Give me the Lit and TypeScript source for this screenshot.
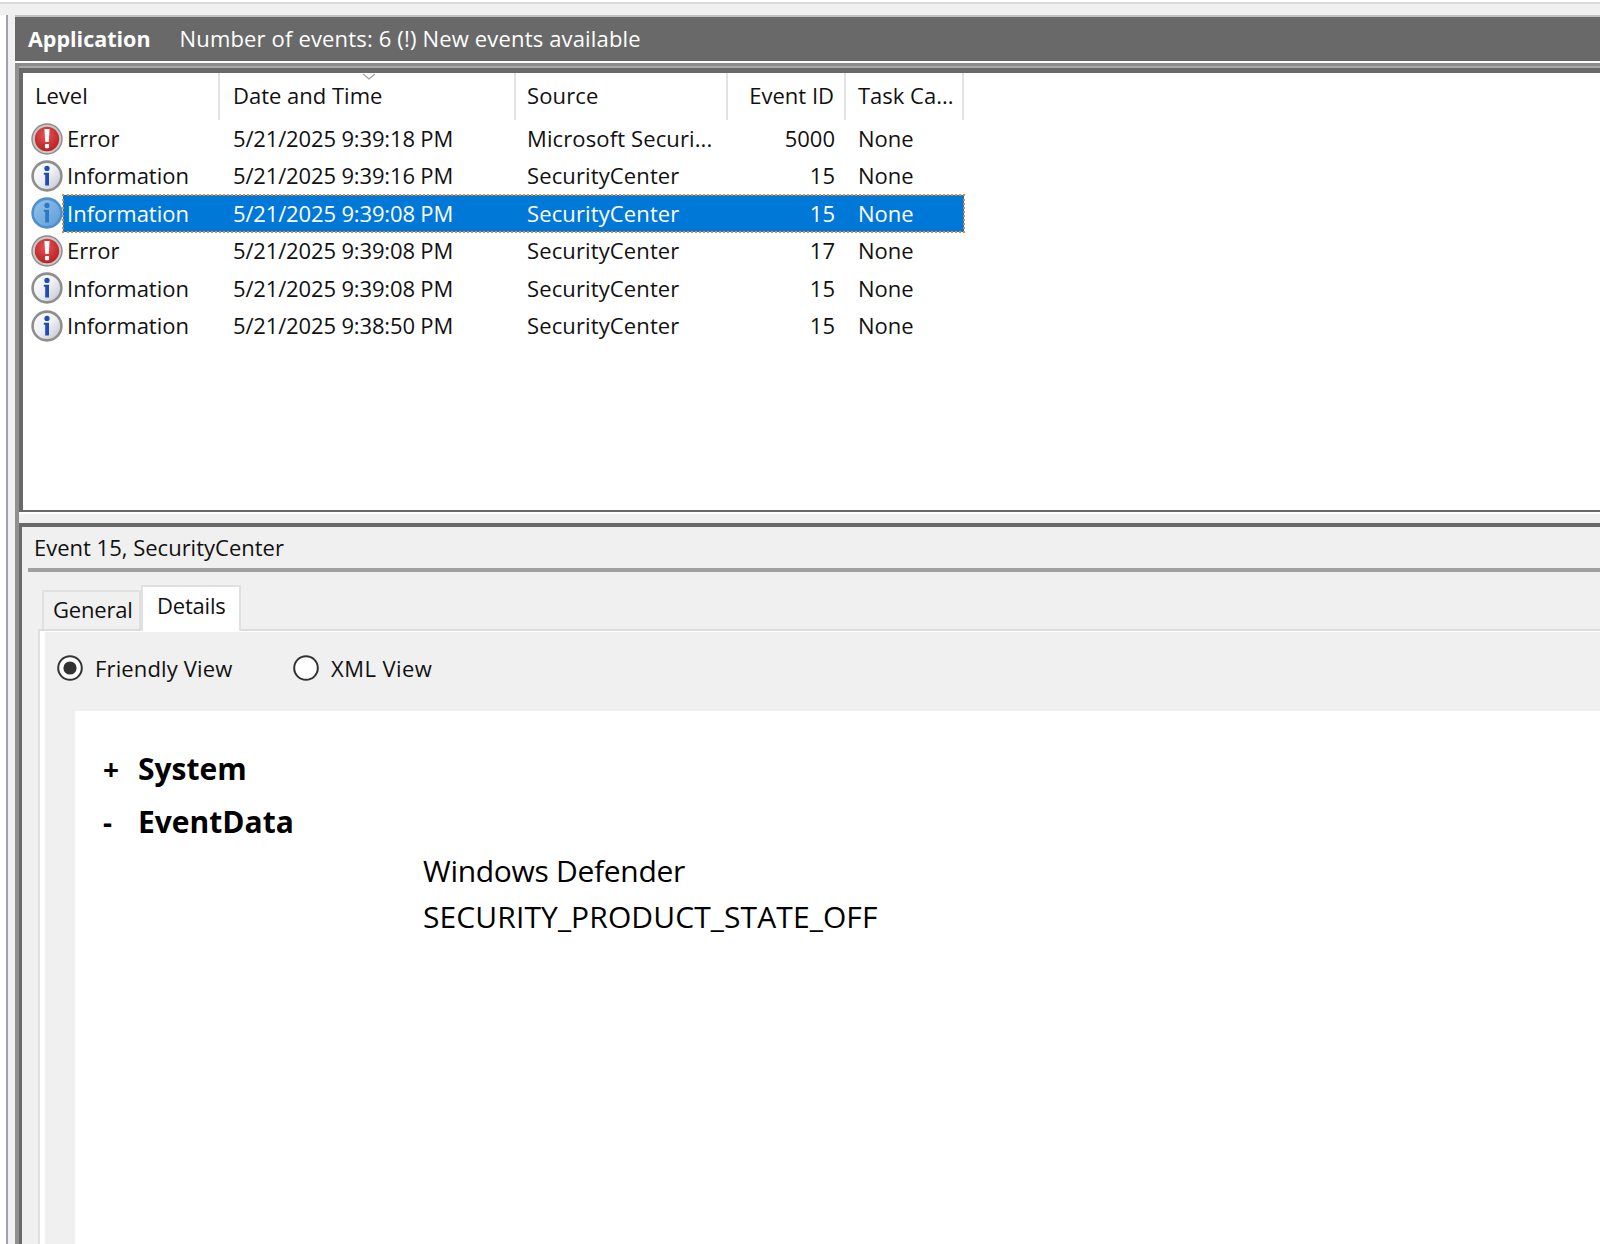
import { LitElement, css, html, svg } from "lit";
import { customElement } from "lit/decorators.js";

type Level = "Error" | "Information";

const EVENTS: { level: Level; date: string; source: string; id: string; selected?: boolean }[] = [
  { level: "Error", date: "5/21/2025 9:39:18 PM", source: "Microsoft Securi...", id: "5000" },
  { level: "Information", date: "5/21/2025 9:39:16 PM", source: "SecurityCenter", id: "15" },
  { level: "Information", date: "5/21/2025 9:39:08 PM", source: "SecurityCenter", id: "15", selected: true },
  { level: "Error", date: "5/21/2025 9:39:08 PM", source: "SecurityCenter", id: "17" },
  { level: "Information", date: "5/21/2025 9:39:08 PM", source: "SecurityCenter", id: "15" },
  { level: "Information", date: "5/21/2025 9:38:50 PM", source: "SecurityCenter", id: "15" },
];

const defs = svg`
  <defs>
    <radialGradient id="red" cx="45%" cy="35%" r="70%">
      <stop offset="0" stop-color="#e65454" />
      <stop offset="1" stop-color="#b81c20" />
    </radialGradient>
    <linearGradient id="pearl" x1="0" y1="0" x2="1" y2="1">
      <stop offset="0" stop-color="#ffffff" />
      <stop offset="0.5" stop-color="#eef0f4" />
      <stop offset="1" stop-color="#bcc0cc" />
    </linearGradient>
    <linearGradient id="blue" x1="0" y1="0" x2="1" y2="1">
      <stop offset="0" stop-color="#93c4ee" />
      <stop offset="1" stop-color="#5c9cd8" />
    </linearGradient>
  </defs>
`;

function levelIcon(level: Level, selected: boolean) {
  if (level === "Error") {
    return html`<svg class="icon" viewBox="0 0 32 32">
      ${defs}
      <circle cx="16" cy="16" r="15" fill="#c8c8c8" stroke="#8c8c8c" stroke-width="1.4" />
      <circle cx="16" cy="16" r="12.2" fill="url(#red)" />
      <path d="M13.4 6h5.2l-.9 13h-3.4z" fill="#fff" />
      <rect x="14" y="21" width="4" height="4.2" rx="0.6" fill="#fff" />
    </svg>`;
  }
  const fill = selected ? "url(#blue)" : "url(#pearl)";
  const ring = selected ? "#4f8fcc" : "#8e8e8e";
  const mark = selected ? "#2f78c0" : "#1f4cb4";
  return html`<svg class="icon" viewBox="0 0 32 32">
    ${defs}
    <circle cx="16" cy="16" r="14.4" fill=${fill} stroke=${ring} stroke-width="2.6" />
    <circle cx="16" cy="8.4" r="2.6" fill=${mark} />
    <path d="M12.8 12.8h5.2v12.8h-3.8v-10.8h-1.4z" fill=${mark} />
  </svg>`;
}

@customElement("app-root")
export class AppRoot extends LitElement {
  static styles = css`
    :host {
      display: block;
      width: 1600px;
      height: 1244px;
      overflow: hidden;
      background: #fff;
      color: #111;
      font-family: "Open Sans", "Noto Sans", sans-serif;
      font-size: 22px;
    }
    .top {
      height: 11px;
      margin-top: 2px;
      border-top: 2px solid #d9d9d9;
      background: #f0f0f0;
    }
    .body {
      display: flex;
      height: 1229px;
    }
    .rail {
      width: 7px;
      margin-left: 6px;
      border-left: 2px solid #a0a0b4;
      background: #f0f0f0;
    }
    .main {
      flex: 1;
      display: flex;
      flex-direction: column;
      min-width: 0;
    }
    .banner {
      height: 44px;
      display: flex;
      align-items: center;
      gap: 29px;
      padding-left: 13px;
      line-height: 42px;
      border-top: 2px solid #c0c0c0;
      border-bottom: 2px solid #fff;
      background: #696969;
      color: #fff;
    }
    .banner b {
      font-weight: 700;
      font-size: 21.5px;
    }
    .banner span {
      letter-spacing: 0.16px;
      padding-bottom: 2px;
    }
    .panes {
      flex: 1;
      display: flex;
      flex-direction: column;
      border-top: 3px solid #8a8a8a;
      border-left: 4px solid #909090;
      min-height: 0;
    }
    .stripe {
      height: 2px;
      background: #a8a8a8;
    }
    .list {
      height: 437px;
      box-sizing: content-box;
      border-top: 5px solid #696969;
      border-left: 4px solid #696969;
      border-bottom: 2px solid #696969;
      background: #fff;
    }
    .cols {
      display: grid;
      grid-template-columns: 197px 296px 212px 118px 118px;
      width: 941px;
    }
    .head > div {
      height: 47px;
      line-height: 44px;
      border-right: 2px solid #e2e2e2;
      box-sizing: border-box;
      white-space: nowrap;
    }
    .sort {
      position: relative;
    }
    .sort svg {
      position: absolute;
      left: 142px;
      top: 0;
      width: 14px;
      height: 7px;
    }
    .row {
      height: 37.4px;
      line-height: 37.4px;
      white-space: nowrap;
    }
    .c {
      padding-left: 13px;
    }
    .head .first {
      padding-left: 12px;
    }
    .date {
      letter-spacing: -0.15px;
    }
    .c.src {
      padding-left: 11px;
      letter-spacing: 0.12px;
    }
    .c.task {
      padding-left: 12px;
    }
    .level {
      display: flex;
      align-items: center;
      padding-left: 8px;
      gap: 4px;
    }
    .num {
      text-align: right;
      padding-right: 11px;
    }
    .head .num {
      padding-right: 10px;
    }
    .icon {
      width: 32px;
      height: 32px;
      flex: none;
    }
    .sel-bar {
      position: absolute;
      left: 40px;
      top: 0;
      bottom: 0;
      right: 0;
      background: #0078d7;
      outline: 2px dotted #e08a30;
      outline-offset: -1px;
    }
    .row.selected {
      position: relative;
      color: #fff;
    }
    .row.selected > div {
      position: relative;
    }
    .row.selected > .sel-bar {
      position: absolute;
    }
    .sash {
      height: 9px;
      border-top: 2px solid #fff;
      background: #f0f0f0;
    }
    .details {
      flex: 1;
      display: flex;
      flex-direction: column;
      min-height: 0;
      border-top: 4px solid #696969;
      border-left: 3px solid #696969;
      background: #f0f0f0;
    }
    .title {
      height: 41px;
      line-height: 41px;
      padding-left: 12px;
    }
    .rule {
      height: 4px;
      margin-left: 6px;
      background: #a0a0a0;
    }
    .tabs {
      height: 57px;
      display: flex;
      align-items: flex-end;
      padding-left: 20px;
    }
    .tab {
      box-sizing: border-box;
      width: 99px;
      height: 39px;
      padding-left: 9px;
      line-height: 34px;
      letter-spacing: -0.2px;
      border: 2px solid #e0e0e0;
      border-bottom: none;
    }
    .tab.active {
      position: relative;
      z-index: 1;
      width: 100px;
      height: 46px;
      margin-bottom: -2px;
      padding-left: 14px;
      line-height: 36px;
      background: #fff;
      border-color: #e0e0e0;
    }
    .panel {
      flex: 1;
      display: flex;
      flex-direction: column;
      min-height: 0;
      margin-left: 16px;
      border-top: 2px solid #dcdcdc;
      border-left: 2px solid #e0e0e0;
      box-shadow: inset 5px 1px 0 #fff;
    }
    .radios {
      height: 74px;
      display: flex;
      align-items: center;
      padding-left: 17px;
      padding-bottom: 6px;
    }
    .radio {
      display: flex;
      align-items: center;
      gap: 12px;
      width: 236px;
      letter-spacing: 0.15px;
    }
    .radio.wide {
      letter-spacing: 0.45px;
    }
    .radio svg {
      width: 26px;
      height: 26px;
      flex: none;
    }
    .doc {
      flex: 1;
      margin-left: 35px;
      padding: 31px 0 0 28px;
      background: #fff;
      color: #000;
      font-size: 30px;
    }
    .node {
      display: flex;
      height: 53px;
      align-items: center;
      font-weight: 700;
    }
    .node span {
      width: 35px;
      font-size: 28px;
    }
    .data {
      padding-left: 320px;
      line-height: 46px;
      letter-spacing: 0.1px;
    }
    .data.tight {
      letter-spacing: -0.3px;
    }
  `;

  private radio(label: string, on: boolean, wide = false) {
    return html`<div class="radio ${wide ? "wide" : ""}">
      <svg viewBox="0 0 26 26">
        <circle cx="13" cy="13" r="11.8" fill="#fff" stroke="#333" stroke-width="2" />
        ${on ? svg`<circle cx="13" cy="13" r="6.6" fill="#333" />` : ""}
      </svg>
      ${label}
    </div>`;
  }

  render() {
    return html`
      <div class="top"></div>
      <div class="body">
        <div class="rail"></div>
        <div class="main">
          <div class="banner">
            <b>Application</b>
            <span>Number of events: 6 (!) New events available</span>
          </div>
          <div class="panes">
            <div class="stripe"></div>
            <div class="list">
              <div class="cols head">
                <div class="c first">Level</div>
                <div class="c sort">
                  <svg viewBox="0 0 14 7">
                    <path d="M1 1l6 5 6-5" fill="none" stroke="#a0a0a0" stroke-width="1.2" />
                  </svg>
                  Date and Time
                </div>
                <div class="c src">Source</div>
                <div class="num">Event ID</div>
                <div class="c task">Task Ca...</div>
              </div>
              ${EVENTS.map(
                (e) => html`<div class="cols row ${e.selected ? "selected" : ""}">
                  ${e.selected ? html`<div class="sel-bar"></div>` : ""}
                  <div class="level">${levelIcon(e.level, !!e.selected)}${e.level}</div>
                  <div class="c date">${e.date}</div>
                  <div class="c src">${e.source}</div>
                  <div class="num">${e.id}</div>
                  <div class="c task">None</div>
                </div>`
              )}
            </div>
            <div class="sash"></div>
            <div class="details">
              <div class="title">Event 15, SecurityCenter</div>
              <div class="rule"></div>
              <div class="tabs">
                <div class="tab">General</div>
                <div class="tab active">Details</div>
              </div>
              <div class="panel">
                <div class="radios">
                  ${this.radio("Friendly View", true)} ${this.radio("XML View", false, true)}
                </div>
                <div class="doc">
                  <div class="node"><span>+</span>System</div>
                  <div class="node"><span>-</span>EventData</div>
                  <div class="data tight">Windows Defender</div>
                  <div class="data">SECURITY_PRODUCT_STATE_OFF</div>
                </div>
              </div>
            </div>
          </div>
        </div>
      </div>
    `;
  }
}
